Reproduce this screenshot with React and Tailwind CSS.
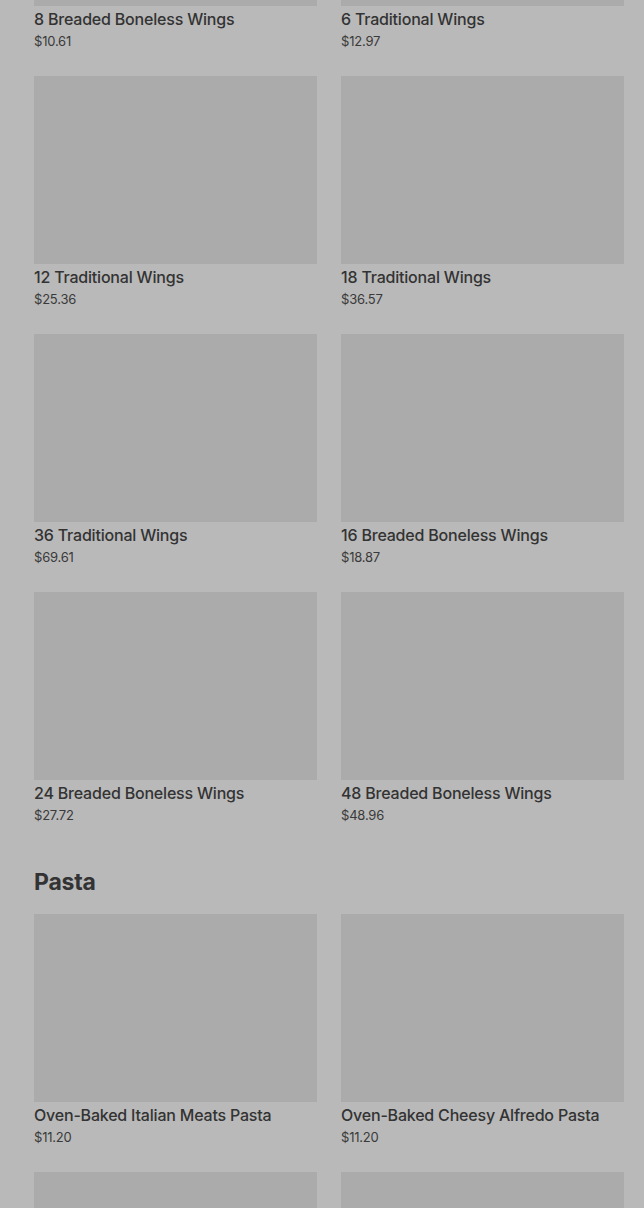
import React from 'react';

const WINGS = [
  { name: '8 Breaded Boneless Wings', price: '$10.61' },
  { name: '6 Traditional Wings', price: '$12.97' },
  { name: '12 Traditional Wings', price: '$25.36' },
  { name: '18 Traditional Wings', price: '$36.57' },
  { name: '36 Traditional Wings', price: '$69.61' },
  { name: '16 Breaded Boneless Wings', price: '$18.87' },
  { name: '24 Breaded Boneless Wings', price: '$27.72' },
  { name: '48 Breaded Boneless Wings', price: '$48.96' },
];

const PASTA = [
  { name: 'Oven-Baked Italian Meats Pasta', price: '$11.20' },
  { name: 'Oven-Baked Cheesy Alfredo Pasta', price: '$11.20' },
  { name: '', price: '' },
  { name: '', price: '' },
];

function ItemCard({ item }) {
  return (
    <div className="flex flex-col">
      <div className="h-[188px] bg-[#ababab]" />
      <div className="h-[42px] pt-[3px]">
        <p className="text-[16px] leading-[20px] font-medium tracking-[-0.2px] text-[#333333] truncate">{item.name}</p>
        <p className="mt-[5px] text-[13px] leading-[14px] tracking-[-0.2px] text-[#3a3a3a]">{item.price}</p>
      </div>
    </div>
  );
}

export default function App() {
  return (
    <div
      className="h-[1208px] w-full overflow-hidden bg-[#b9b9b9]"
      style={{ fontFamily: 'Inter, "Noto Sans", sans-serif' }}
    >
      <div className="-mt-[182px] pl-[34px] pr-[20px]">
        <div className="grid grid-cols-2 gap-x-6 gap-y-[28px]">
          {WINGS.map((item, i) => (
            <ItemCard key={i} item={item} />
          ))}
        </div>

        <h2 className="mt-[44px] mb-[16px] text-[23px] leading-[32px] font-bold tracking-[-0.2px] text-[#333333]">
          Pasta
        </h2>

        <div className="grid grid-cols-2 gap-x-6 gap-y-[28px]">
          {PASTA.map((item, i) => (
            <ItemCard key={i} item={item} />
          ))}
        </div>
      </div>
    </div>
  );
}
